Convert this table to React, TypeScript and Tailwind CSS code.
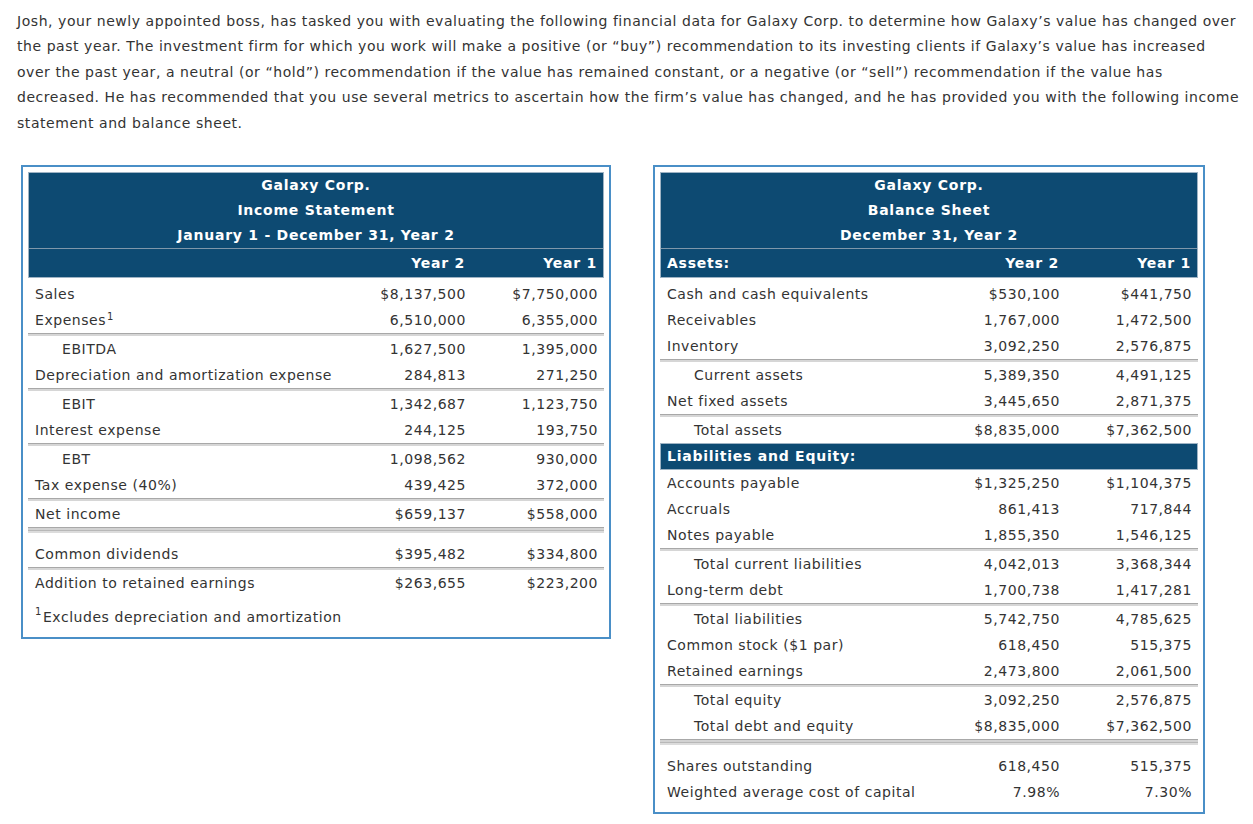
import React from "react";

type Row =
  | { kind: "row"; label: React.ReactNode; a: string; b: string; indent?: boolean }
  | { kind: "line" }
  | { kind: "double" }
  | { kind: "gap" }
  | { kind: "band"; label: string };

const income: Row[] = [
  { kind: "row", label: "Sales", a: "$8,137,500", b: "$7,750,000" },
  {
    kind: "row",
    label: (
      <>
        Expenses<sup className="text-[10px] ml-[1px]">1</sup>
      </>
    ),
    a: "6,510,000",
    b: "6,355,000",
  },
  { kind: "line" },
  { kind: "row", label: "EBITDA", a: "1,627,500", b: "1,395,000", indent: true },
  { kind: "row", label: "Depreciation and amortization expense", a: "284,813", b: "271,250" },
  { kind: "line" },
  { kind: "row", label: "EBIT", a: "1,342,687", b: "1,123,750", indent: true },
  { kind: "row", label: "Interest expense", a: "244,125", b: "193,750" },
  { kind: "line" },
  { kind: "row", label: "EBT", a: "1,098,562", b: "930,000", indent: true },
  { kind: "row", label: "Tax expense (40%)", a: "439,425", b: "372,000" },
  { kind: "line" },
  { kind: "row", label: "Net income", a: "$659,137", b: "$558,000" },
  { kind: "double" },
  { kind: "gap" },
  { kind: "row", label: "Common dividends", a: "$395,482", b: "$334,800" },
  { kind: "line" },
  { kind: "row", label: "Addition to retained earnings", a: "$263,655", b: "$223,200" },
  { kind: "gap" },
];

const balance: Row[] = [
  { kind: "row", label: "Cash and cash equivalents", a: "$530,100", b: "$441,750" },
  { kind: "row", label: "Receivables", a: "1,767,000", b: "1,472,500" },
  { kind: "row", label: "Inventory", a: "3,092,250", b: "2,576,875" },
  { kind: "line" },
  { kind: "row", label: "Current assets", a: "5,389,350", b: "4,491,125", indent: true },
  { kind: "row", label: "Net fixed assets", a: "3,445,650", b: "2,871,375" },
  { kind: "line" },
  { kind: "row", label: "Total assets", a: "$8,835,000", b: "$7,362,500", indent: true },
  { kind: "band", label: "Liabilities and Equity:" },
  { kind: "row", label: "Accounts payable", a: "$1,325,250", b: "$1,104,375" },
  { kind: "row", label: "Accruals", a: "861,413", b: "717,844" },
  { kind: "row", label: "Notes payable", a: "1,855,350", b: "1,546,125" },
  { kind: "line" },
  { kind: "row", label: "Total current liabilities", a: "4,042,013", b: "3,368,344", indent: true },
  { kind: "row", label: "Long-term debt", a: "1,700,738", b: "1,417,281" },
  { kind: "line" },
  { kind: "row", label: "Total liabilities", a: "5,742,750", b: "4,785,625", indent: true },
  { kind: "row", label: "Common stock ($1 par)", a: "618,450", b: "515,375" },
  { kind: "row", label: "Retained earnings", a: "2,473,800", b: "2,061,500" },
  { kind: "line" },
  { kind: "row", label: "Total equity", a: "3,092,250", b: "2,576,875", indent: true },
  { kind: "row", label: "Total debt and equity", a: "$8,835,000", b: "$7,362,500", indent: true },
  { kind: "double" },
  { kind: "gap" },
  { kind: "row", label: "Shares outstanding", a: "618,450", b: "515,375" },
  { kind: "row", label: "Weighted average cost of capital", a: "7.98%", b: "7.30%" },
];

function Rows({ rows }: { rows: Row[] }) {
  return (
    <div className="mt-[3px]">
      {rows.map((r, i) => {
        if (r.kind === "line")
          return (
            <div key={i} className="h-[3px] border-t border-[#a8a8a8] bg-[#d6d6d6]" />
          );
        if (r.kind === "double")
          return (
            <div key={i} className="h-[6px] flex flex-col">
              <div className="h-[3px] border-t border-[#a8a8a8] bg-[#d2d2d2]" />
              <div className="h-[3px] border-t border-[#b8b8b8] bg-[#dcdcdc]" />
            </div>
          );
        if (r.kind === "gap") return <div key={i} className="h-[8px]" />;
        if (r.kind === "band")
          return (
            <div
              key={i}
              className="h-[27px] bg-[#0d4a72] border border-[#9eb3c4] text-white font-bold tracking-[0.75px] flex items-center pl-[6px]"
            >
              {r.label}
            </div>
          );
        return (
          <div key={i} className="h-[26px] flex items-center">
            <div className={"flex-1 whitespace-nowrap " + (r.indent ? "pl-[34px]" : "pl-[7px]")}>{r.label}</div>
            <div className="w-[132px] text-right pr-[6px]">{r.a}</div>
            <div className="w-[132px] text-right pr-[6px]">{r.b}</div>
          </div>
        );
      })}
    </div>
  );
}

function Header({
  lines,
  left,
}: {
  lines: string[];
  left?: string;
}) {
  return (
    <div className="bg-[#0d4a72] border border-[#9eb3c4] text-white font-bold tracking-[0.75px]">
      <div className="flex flex-col items-center">
        {lines.map((l, i) => (
          <div key={i} className="h-[25px] leading-[25px]">
            {l}
          </div>
        ))}
      </div>
      <div className="h-[1px] bg-[#7f97aa]" />
      <div className="h-[28px] flex items-center">
        <div className="flex-1 pl-[6px]">{left ?? ""}</div>
        <div className="w-[132px] text-right pr-[6px]">Year 2</div>
        <div className="w-[132px] text-right pr-[6px]">Year 1</div>
      </div>
    </div>
  );
}

export default function App() {
  return (
    <div
      className="bg-white text-[#333333] text-[14px] tracking-[0.55px] w-[1253px] min-h-[824px] px-[17px] pt-[9px]"
      style={{ fontFamily: '"DejaVu Sans", Verdana, sans-serif' }}
    >
      <p className="leading-[25.4px] text-[#333333] whitespace-nowrap">
        Josh, your newly appointed boss, has tasked you with evaluating the following financial data for Galaxy Corp. to determine how Galaxy’s value has changed over
        <br />
        the past year. The investment firm for which you work will make a positive (or “buy”) recommendation to its investing clients if Galaxy’s value has increased
        <br />
        over the past year, a neutral (or “hold”) recommendation if the value has remained constant, or a negative (or “sell”) recommendation if the value has
        <br />
        decreased. He has recommended that you use several metrics to ascertain how the firm’s value has changed, and he has provided you with the following income
        <br />
        statement and balance sheet.
      </p>

      <div className="flex items-start gap-[42px] ml-[4px] mt-[29px]">
        <div className="w-[590px] border-2 border-[#4a8fc7] pt-[5px] px-[5px] pb-[7px]">
          <Header
            lines={["Galaxy Corp.", "Income Statement", "January 1 - December 31, Year 2"]}
          />
          <Rows rows={income} />
          <div className="h-[26px] flex items-center pl-[7px]">
            <sup className="text-[10px] mr-[1px]">1</sup>Excludes depreciation and amortization
          </div>
        </div>

        <div className="w-[552px] border-2 border-[#4a8fc7] pt-[5px] px-[5px] pb-[7px]">
          <Header
            lines={["Galaxy Corp.", "Balance Sheet", "December 31, Year 2"]}
            left="Assets:"
          />
          <Rows rows={balance} />
        </div>
      </div>
    </div>
  );
}
